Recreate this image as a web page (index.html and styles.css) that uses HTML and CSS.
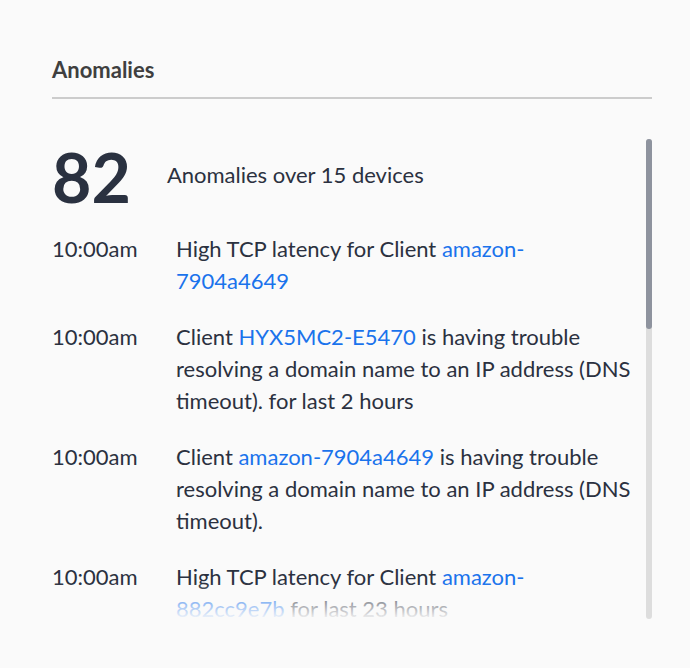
FILE: index.html
```html
<!DOCTYPE html>
<html>
<head>
<meta charset="utf-8">
<link rel="stylesheet" href="styles.css">
</head>
<body>
<section class="panel">
  <h2 class="panel-title">Anomalies</h2>
  <div class="scroll-wrap">
    <div class="scroll">
      <div class="summary">
        <span class="count">82</span>
        <span class="summary-text">Anomalies over 15 devices</span>
      </div>
      <ul class="events">
        <li class="event"><span class="time">10:00am</span><span class="msg">High TCP latency for Client <a class="link" href="#">amazon-7904a4649</a></span></li>
        <li class="event"><span class="time">10:00am</span><span class="msg">Client <a class="link" href="#">HYX5MC2-E5470</a> is having trouble resolving a domain name to an IP address (DNS timeout). for last 2 hours</span></li>
        <li class="event"><span class="time">10:00am</span><span class="msg">Client <a class="link" href="#">amazon-7904a4649</a> is having trouble resolving a domain name to an IP address (DNS timeout).</span></li>
        <li class="event"><span class="time">10:00am</span><span class="msg">High TCP latency for Client <a class="link" href="#">amazon-882cc9e7b</a> for last 23 hours</span></li>
      </ul>
      <div class="fade"></div>
    </div>
    <div class="scrollbar"><div class="thumb"></div></div>
  </div>
</section>
</body>
</html>
```
FILE: styles.css
```css
html, body {
  margin: 0;
  padding: 0;
  background: #fafafa;
}
body {
  font-family: Lato, "Open Sans", sans-serif;
  color: #2b3140;
}
.panel {
  padding: 56px 38px 0 52px;
}
.panel-title {
  margin: 0;
  font-size: 22px;
  font-weight: 700;
  color: #3f3f3f;
  line-height: 28px;
  padding-bottom: 13px;
  border-bottom: 2px solid #cccccc;
}
.scroll-wrap {
  display: flex;
  margin-top: 40px;
  height: 480px;
}
.scroll {
  position: relative;
  flex: 1;
  overflow: hidden;
  padding-right: 14px;
}
.scrollbar {
  width: 6px;
  background: #dddddd;
  border-radius: 3px;
  display: flex;
  flex-direction: column;
}
.thumb {
  height: 190px;
  background: #8e939e;
  border-radius: 3px;
}
.summary {
  display: flex;
  align-items: center;
  gap: 36px;
  padding-top: 4px;
}
.count {
  font-size: 68px;
  font-weight: 700;
  line-height: 68px;
  color: #2a3140;
}
.summary-text {
  font-size: 22px;
  line-height: 32px;
  margin-bottom: 4px;
}
.events {
  list-style: none;
  margin: 22px 0 0;
  padding: 0;
  display: flex;
  flex-direction: column;
  gap: 24px;
}
.event {
  display: grid;
  grid-template-columns: 124px 1fr;
  font-size: 22px;
  line-height: 32px;
}
.link {
  color: #1a73ec;
  text-decoration: none;
}
.fade {
  position: absolute;
  left: 0;
  right: 0;
  bottom: 0;
  height: 36px;
  background: linear-gradient(to bottom, rgba(250,250,250,0), rgba(250,250,250,0.97));
  pointer-events: none;
}
```
